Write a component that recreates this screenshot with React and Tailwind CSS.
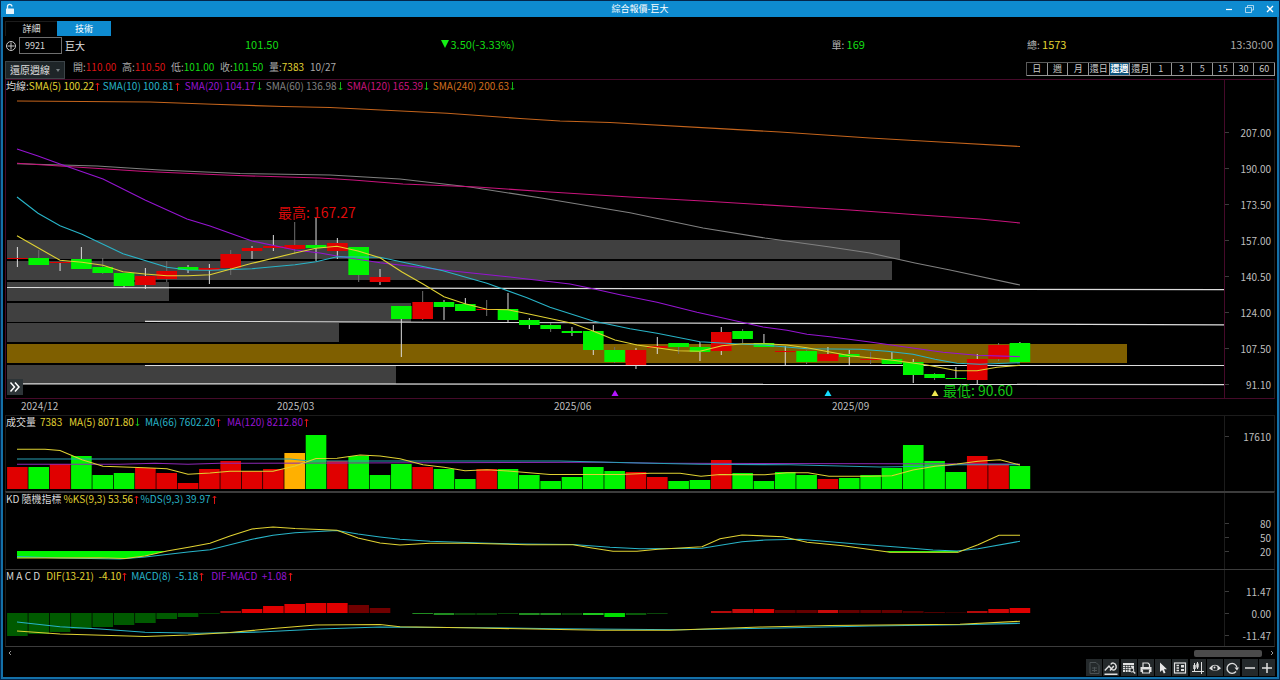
import React from 'react';
import { useState } from 'react';

const RED = '#e00000';
const GREEN = '#00f400';

// centre of the bar with the given index
const barX = (i) => 17.4 + i * 21.33;

// color, body top, body bottom, wick top, wick bottom, dim wick
const candles = [
  [RED, 258, 259, 247, 267],
  [GREEN, 258, 265, 250, 265, 1],
  [RED, 262, 263, 262, 271],
  [GREEN, 259, 269, 247, 269],
  [GREEN, 267, 273, 258, 274, 1],
  [GREEN, 273, 286, 273, 288],
  [RED, 276, 285, 268, 289],
  [RED, 271, 279, 261, 282, 1],
  [GREEN, 267, 270, 265, 273],
  [RED, 268, 270, 264, 284],
  [RED, 254, 268, 250, 275, 1],
  [RED, 248, 251, 246, 259],
  [RED, 246, 248, 235, 251],
  [RED, 245, 249, 222, 254, 1],
  [GREEN, 245, 248, 218, 261],
  [RED, 243, 251, 238, 259],
  [GREEN, 247, 275, 247, 282, 1],
  [RED, 277, 282, 269, 285],
  [GREEN, 306, 319, 306, 357],
  [RED, 302, 319, 291, 320, 1],
  [GREEN, 302, 307, 300, 320],
  [GREEN, 304, 311, 298, 311],
  [RED, 309, 310, 300, 316, 1],
  [GREEN, 309, 320, 293, 322],
  [GREEN, 320, 325, 318, 329],
  [GREEN, 325, 329, 323, 332, 1],
  [GREEN, 331, 333, 327, 336],
  [GREEN, 331, 350, 325, 355],
  [GREEN, 350, 362, 347, 363, 1],
  [RED, 350, 365, 348, 369],
  [RED, 346, 348, 337, 354],
  [GREEN, 343, 347, 343, 354, 1],
  [GREEN, 347, 352, 342, 361],
  [RED, 332, 351, 327, 355],
  [GREEN, 331, 339, 329, 343, 1],
  [GREEN, 343, 347, 334, 347],
  [RED, 351, 352, 346, 365],
  [GREEN, 351, 362, 350, 364, 1],
  [RED, 354, 361, 347, 361],
  [GREEN, 354, 357, 350, 365],
  [RED, 359, 360, 352, 364, 1],
  [GREEN, 359, 364, 352, 364],
  [GREEN, 362, 375, 359, 383],
  [GREEN, 374, 378, 373, 380, 1],
  [GREEN, 378, 379, 367, 379],
  [RED, 359, 380, 354, 384],
  [RED, 345, 359, 343, 361, 1],
  [GREEN, 343, 362, 342, 362],
];

const volumeProfile = [
  [240, 900, '#404040'],
  [261, 892, '#404040'],
  [282, 169, '#404040'],
  [303, 411, '#404040'],
  [323, 339, '#404040'],
  [344, 1127, '#7f5f00'],
  [365, 396, '#404040'],
];

const supportLines = [
  [7, 287.5, 1224, 289.7],
  [145, 321.3, 1224, 324.8],
  [145, 365.5, 1224, 365.5],
  [23, 383.8, 1224, 384.6],
];

const smaLines = [
  ['#c4641c', '17,101 150,102 213,104.3 283,106.5 330,107.5 447,113.3 520,118.5 560,121 610,122.5 720,128.6 780,132 840,136 870,138 940,142 1020,146.5'],
  ['#808080', '17,163.7 97,166 160,170 240,173.5 330,175 400,179 470,187 543,198.3 630,212.7 703,228 765,238 830,247 870,253 915,263 950,270 1020,285'],
  ['#c8147c', '17,163.3 60,166 145,171.5 230,175.3 320,178 353,180 403,184 477,187 550,192 630,197 703,201 800,207 850,210 920,215 980,219 1020,223'],
  ['#9614d2', '17,149 38,156 60,164 103,179 145,200 187,219 210,226 252,241 295,250 320,253 337,256 380,262.7 443,270 510,277 570,284 593,288.7 620,294.7 657,302.3 697,312.3 723,318 763,327 787,330.3 807,334.3 830,336.7 870,342 893,345.3 943,352.3 977,355.3 1020,356.7'],
  ['#28b4c8', '17,197 38,213.3 60,225.7 82,234.3 123,253.7 167,267.3 188,270 210,270.3 252,268.7 295,264.7 316,261.7 337,256.7 380,257.3 402,262 443,270.7 487,283.3 527,297.7 550,307.3 593,321 630,328.7 657,333.3 700,341.7 743,344.3 763,345 807,348.7 860,349.3 887,351.3 913,354.3 935,359.3 957,363.3 980,364.3 1020,362.7'],
  ['#e0d232', '17,235.7 60,260.3 82,262.3 103,265.3 123,271.7 145,274 167,275.7 188,275.7 210,274.7 252,263.3 295,253 316,248.3 337,246.3 358,251 380,257.7 402,272 423,284 444,296.7 465,303.7 487,309.3 508,309.7 530,314.3 572,323.3 593,331 615,340 637,345 678,350.7 700,351.3 722,345.7 743,343.7 765,343.7 787,345 807,347.7 850,355.7 893,360.3 927,365 957,370.7 977,370.7 997,367.3 1020,365.3'],
];

const signals = [
  [615, '#b414ff'],
  [828, '#14dcff'],
  [935, '#f0e650'],
];

// bar tops, the base line is 489
const volumes = [
  467, 467, 464, 456, 475, 473, 468, 473, 483, 469, 461, 471, 469, 453, 435, 461,
  456, 475, 464, 467, 469, 479, 469, 469, 475, 481, 477, 467, 471, 472, 477, 481,
  480, 460, 473, 481, 472, 475, 479, 478, 475, 468, 445, 461, 472, 456, 464, 466,
];
const volumeColors = 'RGRGGGRRRRRRROGRGGGRGGRGGGGGGRRGGRGGGGRGGGGGGRRG';
const colorOf = { R: RED, G: GREEN, O: '#ffb000' };

const volumeLines = [
  ['#8c28b4', '17,464.3 120,464.3 155,463.3 188,464.3 220,463.3 600,462.3 660,463.3 1020,464'],
  ['#28a0b4', '17,459 290,459 310,461 560,461 640,463 700,464.3 790,464.7 880,467 940,466 957,464.7 1020,464.7'],
  ['#e0d232', '17,449.3 45,449.3 60,450.5 82,459.7 103,466.3 145,467.7 167,468.7 188,474.3 210,473 230,471.3 273,471.3 295,466 316,458.5 337,458.3 360,455 380,456 400,458.7 423,464.7 444,467.3 465,470.7 487,469.7 508,471 550,474.5 620,474.5 650,473.3 680,473.3 701,476.3 720,474.5 765,474.7 787,472.7 808,472.7 829,476.3 870,476.3 892,475.7 913,470 935,466.3 957,464 978,461.3 1000,459.7 1020,465'],
];

const kdLines = [
  ['#28b4c8', '17,556.5 60,558 120,559 145,557 188,552 210,549.7 252,539.3 273,535.3 295,532.7 337,530.5 358,534 380,537 400,539.3 430,541.3 480,543 520,544 573,544.5 610,547.3 640,548.7 702,548.3 742,541.7 765,540 800,539.3 857,544 900,547.3 933,550 957,551 978,548.7 1020,541.3'],
  ['#e0d232', '17,558 100,557.7 125,558.5 145,556 167,551 190,547 210,543.3 230,536 252,529 273,527 295,528.5 337,530.3 358,538 380,543 400,545 430,543.3 467,543.3 527,544.7 573,544.7 592,548 613,551.3 637,551.3 658,549.3 702,546.7 720,538.7 742,535 783,536.7 807,542.3 843,545.7 890,552.3 958,552.3 978,544.7 999,535.3 1020,535.3'],
];

// index, far edge, color
const histogram = [
  [0, 636, '#005a00'], [1, 634, '#005a00'], [2, 632, '#005a00'], [3, 629, '#005a00'],
  [4, 627, '#005a00'], [5, 625, '#005a00'], [6, 623, '#005a00'], [7, 619, '#005a00'],
  [8, 617, '#005a00'], [9, 614, '#003c00'],
  [10, 611, '#a00a0a'], [11, 609, RED], [12, 606, RED], [13, 604, RED], [14, 603, RED], [15, 603, RED],
  [16, 605, '#700000'], [17, 608, '#700000'],
  [19, 614, '#208c20'], [20, 615, '#208c20'], [21, 615, '#0a460a'], [22, 615, '#0a460a'], [23, 614, '#0a460a'],
  [24, 615, '#208c20'], [25, 615, '#208c20'], [26, 615, '#0a460a'], [27, 615, '#1ec81e'], [28, 617, '#00dc00'],
  [29, 615, '#0a5a0a'], [30, 614, '#0a460a'],
  [33, 611, '#b40a0a'], [34, 609, '#c80a0a'], [35, 609, RED], [36, 610, '#640000'], [37, 610, '#640000'],
  [38, 610, '#c80a0a'], [39, 610, '#640000'], [40, 610, '#640000'], [41, 610, '#640000'], [42, 611, '#500000'],
  [43, 612, '#500000'], [44, 612, '#280000'], [45, 611, '#b40a0a'], [46, 609, '#d20505'], [47, 608, RED],
];

const macdLines = [
  ['#28b4c8', '17,622 60,626.7 100,629 145,632.3 200,633.3 260,632 320,629 380,627 480,627.7 560,628.7 680,629.7 780,628 870,626 960,624.7 1020,623.3'],
  ['#e0d232', '17,631 60,634 145,636.5 188,635 230,632.5 273,628.5 316,625 380,624.5 400,626.7 480,628 600,630.3 670,630.3 760,627 830,625.5 960,624.3 1020,621.3'],
];

const periods = ['日', '週', '月', '還日', '還週', '還月', '1', '3', '5', '15', '30', '60'];

const Arrow = ({ up }) => (
  <svg viewBox="0 0 5 9" className={up ? 'w-[5px] h-[9px] shrink-0 text-[#e01414]' : 'w-[5px] h-[9px] shrink-0 text-[#14b414]'}>
    <path d={up ? 'M2.5 9V1M.8 3l1.7-2 1.7 2' : 'M2.5 0v8M.8 6l1.7 2 1.7-2'} fill="none" stroke="currentColor" />
  </svg>
);

const Legend = ({ title, items }) => (
  <div className="flex h-3 items-center text-[10px] leading-3 whitespace-pre">
    <span className="text-[#d8d8d8]">{title}</span>
    {items.map(([text, cls, up]) => (
      <span key={text} className={'flex shrink-0 items-center gap-px ' + cls}>
        {text}
        {up !== undefined && <Arrow up={up} />}
      </span>
    ))}
  </div>
);

const Plot = ({ top, height, className, children }) => (
  <svg
    viewBox={`6 ${top} 1218 ${height}`}
    preserveAspectRatio="none"
    className={'block w-full ' + className}
  >
    {children}
  </svg>
);

const Lines = ({ lines }) =>
  lines.map(([color, points]) => (
    <polyline key={points} points={points} fill="none" stroke={color} strokeWidth="1.1" />
  ));

const Axis = ({ labels, className, rowClass }) => (
  <div className={'flex w-[50px] shrink-0 flex-col border-l text-[10px] text-[#bebebe] ' + className}>
    {labels.map((label) => (
      <div key={label} className={'flex items-center justify-between pr-[3px] ' + rowClass}>
        <span className="h-px w-1 bg-[#3c3c3c]"></span>
        {label}
      </div>
    ))}
  </div>
);

const TitleBar = () => (
  <header className="relative flex h-4 items-center justify-between bg-[#0e8bd0] px-1 text-white">
    <svg viewBox="0 0 10 12" className="h-3 w-[10px]">
      <path d="M2.5 6V3.5a2.2 2.2 0 0 1 4.4 0" fill="none" stroke="#e6f3fb" strokeWidth="1.3" />
      <rect x="1" y="5.5" width="8" height="5.5" rx=".6" fill="#e6f3fb" />
    </svg>
    <h1 className="absolute inset-x-0 text-center text-[9px] leading-4">綜合報價-巨大</h1>
    <div className="relative flex items-center gap-3 pr-px">
      <button aria-label="最小化">
        <svg viewBox="0 0 8 8" className="h-2 w-2"><path d="M1 4.5h6" stroke="#fff" strokeWidth="1.2" /></svg>
      </button>
      <button aria-label="還原">
        <svg viewBox="0 0 9 8" className="h-2 w-[9px]"><path d="M.5 2.5h6v5h-6zM2.500 2.500v-2h6v4.500h-2" fill="none" stroke="#cfe8f6" strokeWidth=".8" /></svg>
      </button>
      <button aria-label="關閉">
        <svg viewBox="0 0 8 8" className="h-2 w-2"><path d="M1 1l6 6M7 1L1 7" stroke="#fff" strokeWidth="1.3" /></svg>
      </button>
    </div>
  </header>
);

const QuoteRow = () => (
  <div className="mt-px grid h-[17px] grid-cols-[240px_1fr_2fr_1fr_248px] items-start text-[11px] leading-[14px]">
    <div className="flex items-center">
      <button aria-label="加入">
        <svg viewBox="0 0 12 12" className="h-3 w-3">
          <circle cx="6" cy="6" r="4.500" fill="none" stroke="#c8c8c8" />
          <path d="M6 2.500v7M2.500 6h7" stroke="#c8c8c8" />
        </svg>
      </button>
      <input
        aria-label="股票代號"
        defaultValue="9921"
        className="ml-[2px] h-[17px] w-[43px] border border-[#6e6e6e] bg-black pl-[5px] text-[9px] text-[#d8d8d8]"
      />
      <span className="ml-[3px] text-[10px] text-[#e0e0e0]">巨大</span>
    </div>
    <span className="text-[#14dc14]">101.50</span>
    <span className="flex items-center gap-[2px] text-[#14dc14]">
      <svg viewBox="0 0 8 8" className="h-2 w-2"><path d="M0 0h8L4 8z" fill="#14f014" /></svg>
      3.50(-3.33%)
    </span>
    <span className="text-[10px] text-[#b4b4b4]">單: <span className="text-[11px] text-[#14dc14]">169</span></span>
    <div className="flex justify-between pr-[2px]">
      <span className="text-[10px] text-[#b4b4b4]">總: <span className="text-[11px] text-[#e0d232]">1573</span></span>
      <span className="text-[#a8a8a8]">13:30:00</span>
    </div>
  </div>
);

const prices = [
  ['開', '110.00', 'text-[#dc1414]'],
  ['高', '110.50', 'text-[#dc1414]'],
  ['低', '101.00', 'text-[#14dc14]'],
  ['收', '101.50', 'text-[#14dc14]'],
  ['量', '7383', 'text-[#e0d232]'],
];

const PeriodRow = () => {
  const [period, setPeriod] = useState('還週');
  return (
    <div className="mt-[7px] flex h-[18px] items-start text-[10px]">
      <div className="relative">
        <select
          aria-label="線圖類型"
          className="h-[18px] w-[60px] appearance-none border border-[#3c4448] bg-[#1e2528] pl-1 text-[10px] leading-4 text-[#e0e0e0]"
        >
          <option>還原週線</option>
        </select>
        <svg viewBox="0 0 4 3" className="absolute top-2 right-[5px] h-[3px] w-1"><path d="M0 0h4L2 3z" fill="#788084" /></svg>
      </div>
      <dl className="ml-2 flex leading-3">
        {prices.map(([name, value, cls]) => (
          <div key={name} className={name === '量' ? 'flex w-[41px]' : 'flex w-[49px]'}>
            <dt className="text-[#a8a8a8]">{name}:</dt>
            <dd className={cls}>{value}</dd>
          </div>
        ))}
      </dl>
      <span className="leading-3 text-[#a8a8a8]">10/27</span>
      <div className="mt-px ml-auto grid h-[14px] w-[249px] grid-cols-12 border-t border-l border-[#5a5a5a] text-[9px] leading-3">
        {periods.map((p) => (
          <button
            key={p}
            onClick={() => setPeriod(p)}
            className={
              p === period
                ? 'border-r border-b border-[#969696] bg-[#0a5078] font-bold whitespace-nowrap text-white'
                : 'border-r border-b border-[#969696] whitespace-nowrap text-[#c8c8c8]'
            }
          >
            {p}
          </button>
        ))}
      </div>
    </div>
  );
};

const PricePanel = () => (
  <section className="flex border border-[#460a2a] border-r-[#1c1c1c]">
    <div className="relative min-w-0 flex-1">
      <Legend
        title="均線:"
        items={[
          ['SMA(5) 100.22', 'w-[74px] text-[#e0d232]', true],
          ['SMA(10) 100.81', 'w-[82px] text-[#28b4c8]', true],
          ['SMA(20) 104.17', 'w-[81px] text-[#9614d2]', false],
          ['SMA(60) 136.98', 'w-[81px] text-[#808080]', false],
          ['SMA(120) 165.39', 'w-[86px] text-[#c8147c]', false],
          ['SMA(240) 200.63', 'w-[86px] text-[#d26e1e]', false],
        ]}
      />
      <Plot top={92} height={306} className="h-[306px]">
        {volumeProfile.map(([y, end, color]) => (
          <rect key={y} x="7" y={y} width={end - 7} height="19" fill={color} />
        ))}
        {supportLines.map(([x1, y1, x2, y2]) => (
          <line key={y1} x1={x1} y1={y1} x2={x2} y2={y2} stroke="#dcdcdc" strokeWidth="1.2" />
        ))}
        {candles.map(([color, top, bottom, high, low, dim], i) => (
          <g key={i}>
            <line x1={barX(i)} x2={barX(i)} y1={high} y2={low} stroke={dim ? '#6e6e6e' : '#dcdcdc'} />
            <rect x={barX(i) - 10.3} y={top} width="20.6" height={bottom - top} fill={color} />
          </g>
        ))}
        <Lines lines={smaLines} />
        {signals.map(([x, color]) => (
          <path key={x} d={`M${x - 3.5} 396h7l-3.500 -6z`} fill={color} />
        ))}
      </Plot>
      <span className="absolute top-[124px] left-[272px] text-[14px] leading-4 text-[#dc0a0a]">最高: 167.27</span>
      <span className="absolute top-[302px] left-[937px] text-[14px] leading-4 text-[#14c814]">最低: 90.60</span>
      <button aria-label="展開" className="absolute top-[299px] left-px flex h-4 w-4 items-center justify-center bg-[#2d3437]">
        <svg viewBox="0 0 12 12" className="h-3 w-3">
          <path d="M1.500 1.500L5.500 6l-4 4.500M6 1.500L10 6l-4 4.500" fill="none" stroke="#fff" strokeWidth="1.5" />
        </svg>
      </button>
    </div>
    <Axis
      labels={['207.00', '190.00', '173.50', '157.00', '140.50', '124.00', '107.50', '91.10']}
      className="gap-5 border-[#460a2a] pt-[44px]"
      rowClass="h-4"
    />
  </section>
);

const DateRow = () => (
  <div className="flex h-4 pl-4 text-[10px] leading-[14px] text-[#bebebe]">
    <span className="w-[256px]">2024/12</span>
    <span className="w-[277px]">2025/03</span>
    <span className="w-[278px]">2025/06</span>
    <span>2025/09</span>
  </div>
);

const VolumePanel = () => (
  <section className="flex border-x border-t border-[#1c1c1c]">
    <div className="min-w-0 flex-1">
      <Legend
        title="成交量"
        items={[
          ['7383', 'ml-1 w-[29px] text-[#e0d232]'],
          ['MA(5) 8071.80', 'w-[76px] text-[#e0d232]', false],
          ['MA(66) 7602.20', 'w-[82px] text-[#28b4c8]', true],
          ['MA(120) 8212.80', 'w-[86px] text-[#9614d2]', true],
        ]}
      />
      <Plot top={428} height={63} className="h-[63px]">
        {volumes.map((top, i) => (
          <rect key={i} x={barX(i) - 10.3} y={top} width="20.6" height={489 - top} fill={colorOf[volumeColors[i]]} />
        ))}
        <Lines lines={volumeLines} />
      </Plot>
    </div>
    <Axis labels={['17610']} className="border-[#1c1c1c] pt-[13px]" rowClass="h-[14px]" />
  </section>
);

const KdPanel = () => (
  <section className="flex border-x border-t-2 border-[#1c1c1c] border-t-[#3c3c3c]">
    <div className="min-w-0 flex-1">
      <Legend
        title="KD 隨機指標"
        items={[
          ['%KS(9,3) 53.56', 'ml-[2px] w-[77px] text-[#e0d232]', true],
          ['%DS(9,3) 39.97', 'w-[77px] text-[#28b4c8]', true],
        ]}
      />
      <Plot top={505} height={64} className="h-16">
        <path d="M17 551H167L145 556L125 558.500L100 557.700L17 558z" fill={GREEN} />
        <path d="M885 551H958V552.500H890z" fill={GREEN} />
        <Lines lines={kdLines} />
      </Plot>
    </div>
    <Axis labels={['80', '50', '20']} className="border-[#1c1c1c] pt-[23px]" rowClass="h-[14px]" />
  </section>
);

const MacdPanel = () => (
  <section className="flex border-x border-y border-x-[#1c1c1c] border-y-[#3c3c3c]">
    <div className="min-w-0 flex-1">
      <Legend
        title="M A C D"
        items={[
          ['DIF(13-21)  -4.10', 'ml-[6px] w-[85px] text-[#e0d232]', true],
          ['MACD(8)  -5.18', 'w-[80px] text-[#28b4c8]', true],
          ['DIF-MACD  +1.08', 'w-[88px] text-[#9614d2]', true],
        ]}
      />
      <Plot top={582} height={63} className="h-[63px]">
        {histogram.map(([i, edge, color]) => (
          <rect key={i} x={barX(i) - 10.3} y={Math.min(edge, 613)} width="20.6" height={Math.abs(edge - 613)} fill={color} />
        ))}
        <Lines lines={macdLines} />
      </Plot>
    </div>
    <Axis labels={['11.47', '0.00', '-11.47']} className="border-[#1c1c1c] pt-[10px]" rowClass="h-[22px]" />
  </section>
);

const ScrollRow = () => (
  <div className="flex h-3 items-center justify-between pr-px pl-[3px]">
    <button aria-label="向左">
      <svg viewBox="0 0 4 6" className="h-[6px] w-1"><path d="M3 1L1 3l2 2" fill="none" stroke="#969696" /></svg>
    </button>
    <div className="flex items-center gap-2">
      <div className="h-[7px] w-[68px] rounded-[2px] bg-[#4b4b4b]"></div>
      <button aria-label="向右">
        <svg viewBox="0 0 4 6" className="h-[6px] w-1"><path d="M1 1l2 2-2 2" fill="none" stroke="#969696" /></svg>
      </button>
    </div>
  </div>
);

const tools = [
  ['匯出', <g stroke="#4b5255" fill="none"><path d="M3 1.500h6l3 3v8H3z" /><path d="M5 7h5M5 9.500h5M7.500 6v5" /></g>],
  ['畫線', <g stroke="#e0e0e0" fill="none" strokeWidth="1.4"><path d="M.8 9.500L5 5l2.800 3.500c2.800 1.500 5-1 4.300-3.700C11.300 1.500 7.800 1.300 6.800 3.500M9.800 5L6 9.500M.5 13.200h13" /></g>],
  ['報表', <g><path d="M1 2h11v6H8v3H1z" fill="#e0e0e0" /><path d="M1 4.500h11M1 6.500h9M1 8.500h7M3.500 4v7M6 4v7M8.500 4v4" stroke="#24292b" strokeWidth=".7" /><circle cx="9.800" cy="9" r="2" fill="#24292b" stroke="#e0e0e0" /><path d="M11.300 10.500l2 2" stroke="#e0e0e0" strokeWidth="1.3" /></g>],
  ['列印', <g><path d="M4 6V2h5l1.500 1.500V6" fill="none" stroke="#e0e0e0" strokeWidth="1.2" /><path d="M1.500 6h11v5h-2V8.500h-7V11h-2z" fill="#e0e0e0" /><path d="M3.500 9v3h7V9" fill="none" stroke="#e0e0e0" strokeWidth="1.2" /></g>],
  ['游標', <path d="M4 1.500v9.500l2.200-2 1.600 3.500 1.700-.8L8 8.300h3z" fill="#e8e8e8" />],
  ['版面', <g><rect x="1.500" y="2" width="11" height="10" fill="none" stroke="#e0e0e0" strokeWidth="1.2" /><path d="M3.500 4.500h2.500M3.500 7h2.500M3.500 9.500h2.500" stroke="#e0e0e0" strokeWidth="1.3" /><path d="M8 4h3v2.500H8zM8 8h3v2H8z" fill="#e0e0e0" /></g>],
  ['K線', <g stroke="#e0e0e0" fill="none"><path d="M3.500 2v8M6.500 1v7M10.500 1v12M1 10.500h12" /><path d="M3.500 4v4M6.500 2.500v4" strokeWidth="2.400" /></g>],
  ['顯示', <g><path d="M1 7.200Q7 .5 13 7.200Q7 13 1 7.200z" fill="#e0e0e0" /><circle cx="7" cy="7" r="2.600" fill="#24292b" /><circle cx="6.500" cy="6.500" r="1" fill="#e0e0e0" /></g>],
  ['重新整理', <g><path d="M11 10.500A5 5 0 1 1 12 6.500" fill="none" stroke="#e0e0e0" strokeWidth="1.3" /><path d="M9.500 6.500h4.500l-2 3z" fill="#e0e0e0" /></g>],
  ['縮小', <path d="M2 7h10" stroke="#e0e0e0" strokeWidth="1.5" />],
  ['放大', <path d="M2 7h10M7 2v10" stroke="#e0e0e0" strokeWidth="1.5" />],
];

const Toolbar = () => (
  <div className="ml-auto flex w-[189px] justify-between">
    {tools.map(([name, icon]) => (
      <button key={name} aria-label={name} className="flex h-[17px] w-4 items-center justify-center bg-[#24292b]">
        <svg viewBox="0 0 14 14" className="h-[14px] w-[14px]">{icon}</svg>
      </button>
    ))}
  </div>
);

const App = () => {
  return (
    <div className="min-h-screen border border-[#04254a] bg-black font-['Noto_Sans_CJK_TC',sans-serif]">
      <TitleBar />
      <main className="border-x-2 border-b-2 border-[#1470a8] px-[2px] pt-1 pb-px">
        <nav className="flex h-[15px] text-[9px] leading-[15px]">
          <button className="w-[52px] border-t border-l border-[#1c1c1c] leading-[14px] text-[#e0e0e0]">詳細</button>
          <button className="w-[54px] bg-[#0e8bd0] text-white">技術</button>
        </nav>
        <QuoteRow />
        <PeriodRow />
        <PricePanel />
        <DateRow />
        <VolumePanel />
        <KdPanel />
        <MacdPanel />
        <ScrollRow />
        <Toolbar />
      </main>
    </div>
  );
};

export default App;
